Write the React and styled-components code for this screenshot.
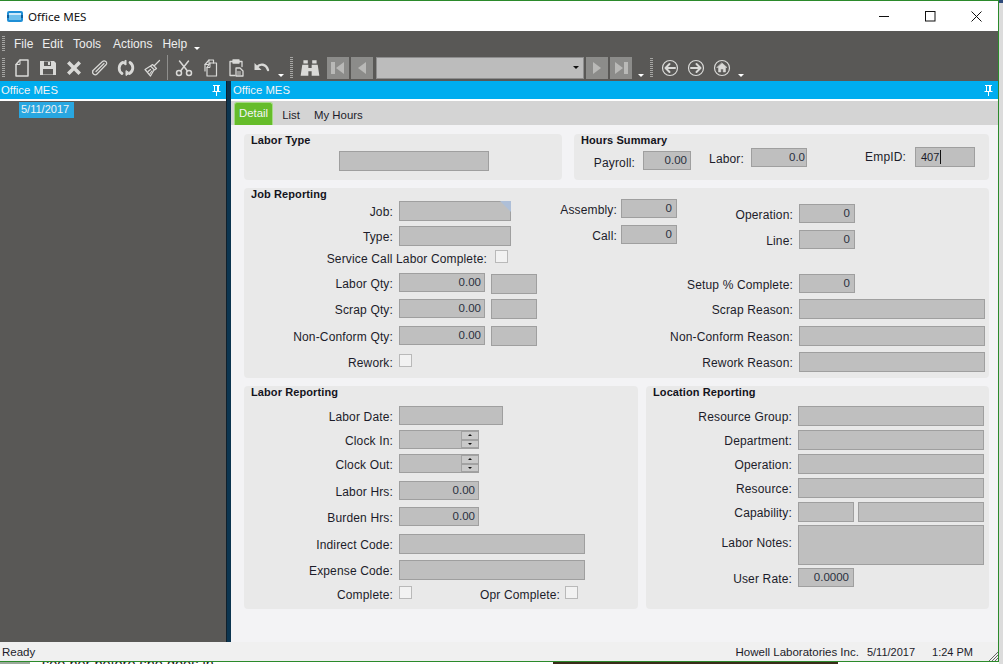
import React from 'react';
import styled, { createGlobalStyle } from 'styled-components';

const GlobalStyle = createGlobalStyle`
  html, body { margin: 0; padding: 0; background: #e4e4e4; overflow: hidden; }
  * { box-sizing: border-box; }
  body { font-family: "Liberation Sans", Arial, sans-serif; font-size: 12px; color: #1c1c2a; }
`;

const Desktop = styled.div`
  position: relative;
  width: 1003px;
  height: 664px;
  display: grid;
  grid-template-columns: 999px 4px;
  grid-template-rows: 662px 2px;
  overflow: hidden;
`;

const RightStrip = styled.div`
  grid-column: 2;
  grid-row: 1 / 3;
  background: linear-gradient(#2d4a7a 0 3px, #dcdcdc 3px);
`;

const BottomStrip = styled.div`
  grid-column: 1;
  grid-row: 2;
  background: linear-gradient(90deg, #9aa89a 0 30px, #fff 30px);
  overflow: hidden;
  padding-left: 42px;
  font-size: 14.5px;
  line-height: 5px;
  white-space: nowrap;
  color: #222;
`;

const PhotoBit = styled.div`
  position: absolute;
  left: 553px;
  top: 662px;
  width: 285px;
  height: 2px;
  background: #3a2c1a;
`;

const Win = styled.div`
  grid-column: 1;
  grid-row: 1;
  display: flex;
  flex-direction: column;
  height: 662px;
  background: #fff;
  border-top: 1px solid #2b8a2b;
  border-right: 1px solid #2b8a2b;
  border-bottom: 1px solid #2b8a2b;
`;

const TitleBar = styled.div`
  height: 30px;
  display: flex;
  align-items: center;
  padding-left: 7px;
  background: #fff;
  flex: none;
`;

const AppName = styled.span`
  font-family: "Noto Sans", sans-serif;
  font-size: 11.6px;
  margin-left: 5px;
  color: #111;
`;

const WinControls = styled.div`
  margin-left: auto;
  display: flex;
  align-items: center;
  margin-right: -1px;
`;

const WinButton = styled.div`
  width: 46px;
  height: 30px;
  display: flex;
  align-items: center;
  justify-content: center;
`;

const Bars = styled.div`
  height: 50px;
  flex: none;
  background: #595856;
  display: flex;
  flex-direction: column;
`;

const MenuBar = styled.div`
  height: 23px;
  display: flex;
  align-items: center;
  padding-left: 2px;
  padding-top: 2px;
  color: #eee;
`;

const Grip = styled.div`
  width: 3px;
  height: ${p => p.$h || 20}px;
  flex: none;
  margin: 0 ${p => p.$mr || 0}px 0 ${p => p.$ml || 0}px;
  background: repeating-linear-gradient(#a5a5a3 0 1px, transparent 1px 2px);
`;

const MenuItem = styled.span`
  margin-right: ${p => p.$mr}px;
`;

const Chevron = styled.span`
  flex: none;
  width: 6px;
  height: 3px;
  align-self: flex-end;
  margin: 0 ${p => p.$mr || 0}px ${p => p.$mb || 5}px ${p => p.$ml || 0}px;
  border-top: 3px solid #fff;
  border-left: 3px solid transparent;
  border-right: 3px solid transparent;
`;

const ToolBar = styled.div`
  height: 27px;
  display: flex;
  align-items: center;
  padding-left: 2px;
`;

const ToolBtn = styled.div`
  width: 26px;
  height: 24px;
  flex: none;
  display: flex;
  align-items: center;
  justify-content: center;
  color: #d9d9d7;
`;

const Sep = styled.div`
  width: 1px;
  height: 25px;
  margin: 0 3px 0 2px;
  background: #8f8f8d;
`;

const NavBtn = styled.div`
  width: 22px;
  height: 22px;
  flex: none;
  margin-left: ${p => p.$ml || 0}px;
  background: #8c8c8a;
  color: #b9b9b7;
  display: flex;
  align-items: center;
  justify-content: center;
`;

const Combo = styled.div`
  width: 208px;
  height: 22px;
  flex: none;
  margin: 0 2px 0 3px;
  background: #bcbcbc;
  border: 1px solid #8e8e8e;
  display: flex;
  align-items: center;
  justify-content: flex-end;
  padding-right: 4px;
`;

const ComboArrow = styled.span`
  width: 0;
  height: 0;
  border-top: 3px solid #111;
  border-left: 3px solid transparent;
  border-right: 3px solid transparent;
`;

const Body = styled.div`
  flex: 1;
  display: flex;
  min-height: 0;
`;

const Side = styled.div`
  width: 226px;
  flex: none;
  background: #595856;
  display: flex;
  flex-direction: column;
`;

const Splitter = styled.div`
  width: 5px;
  flex: none;
  background: #0c3550;
  border-left: 1px solid #10202c;
`;

const Main = styled.div`
  flex: 1;
  display: flex;
  flex-direction: column;
  min-width: 0;
  background: #f3f3f5;
`;

const DockHeader = styled.div`
  height: 18px;
  flex: none;
  background: #00adef;
  color: #f4f4f4;
  font-size: 11.3px;
  display: flex;
  align-items: center;
  justify-content: space-between;
  padding: 0 5px 0 ${p => p.$pl}px;
  box-shadow: 0 2px 0 #fff;
`;

const TreeDate = styled.div`
  margin: 3px 0 0 19px;
  width: 55px;
  height: 16px;
  line-height: 15px;
  padding-left: 2px;
  font-size: 11px;
  background: #29a7e1;
  color: #f2f2f2;
`;

const TabStrip = styled.div`
  margin-top: 2px;
  height: 24px;
  flex: none;
  background: #d4d4d4;
  display: flex;
  align-items: flex-end;
  padding-left: 3px;
  font-size: 11.4px;
`;

const Tab = styled.div`
  width: ${p => p.$w}px;
  height: ${p => (p.$active ? 23 : 20)}px;
  margin-right: ${p => p.$mr}px;
  text-align: center;
  line-height: ${p => (p.$active ? 21 : 20)}px;
  background: ${p => (p.$active ? '#65bc2a' : 'transparent')};
  color: ${p => (p.$active ? '#f4f4f4' : '#1c1c2a')};
  border: ${p => (p.$active ? '1px solid #a4dc84' : '0')};
  border-bottom: 0;
  border-radius: 3px 3px 0 0;
  white-space: nowrap;
`;

const Content = styled.div`
  flex: 1;
  padding: 9px 9px 0 13px;
  display: flex;
  flex-direction: column;
  gap: 8px;
`;

const GroupRow = styled.div`
  display: flex;
  gap: ${p => p.$gap}px;
`;

const Group = styled.div`
  width: ${p => p.$w}px;
  height: ${p => p.$h}px;
  background: #e9e9e9;
  border-radius: 4px;
`;

const GroupTitle = styled.div`
  height: 11px;
  padding-left: 7px;
  font-weight: bold;
  font-size: 11px;
  letter-spacing: 0.1px;
  line-height: 13px;
  color: #14141c;
  white-space: nowrap;
`;

const Columns = styled.div`
  display: flex;
`;

const Column = styled.div`
  width: ${p => p.$w}px;
  flex: none;
  display: flex;
  flex-direction: column;
`;

const Row = styled.div`
  display: flex;
  align-items: flex-start;
  margin-top: ${p => p.$top || 0}px;
  margin-left: ${p => p.$left || 0}px;
`;

/* height stays small so the line height only places the text, the box sets the row */
const LabelText = styled.label`
  width: ${p => p.$w}px;
  height: 13px;
  flex: none;
  display: flex;
  justify-content: flex-end;
  margin-right: ${p => p.$gap}px;
  white-space: nowrap;
  letter-spacing: 0.15px;
  line-height: ${p => p.$lh}px;
  color: #1c1c2a;
`;

const Box = styled.div`
  width: ${p => p.$w}px;
  height: ${p => p.$h}px;
  flex: none;
  margin-top: ${p => p.$top || 0}px;
  margin-left: ${p => p.$ml || 0}px;
  background: #bfbfbf;
  border: 1px solid #9f9f9f;
  text-align: right;
  padding-right: ${p => p.$pr ?? 3}px;
  font-size: 11.5px;
  line-height: 17px;
  color: #2a3040;
  position: relative;
  white-space: nowrap;
`;

const FlagCorner = styled.span`
  position: absolute;
  top: -1px;
  right: -1px;
  width: 0;
  height: 0;
  border-top: 11px solid #aebfd8;
  border-left: 11px solid transparent;
`;

const EmpValue = styled.span`
  display: block;
  text-align: left;
  padding-left: 5px;
  font-size: 11px;
  line-height: 18px;
  color: #1c1c2a;
`;

const Caret = styled.span`
  display: inline-block;
  width: 1px;
  height: 14px;
  margin-left: 1px;
  vertical-align: -3px;
  background: #111;
`;

const Check = styled.div`
  width: 13px;
  height: 13px;
  flex: none;
  background: #f2f2f2;
  border: 1px solid #b9b9b9;
`;

const SpinBox = styled(Box)`
  padding: 0;
  display: flex;
  justify-content: flex-end;
`;

const SpinColumn = styled.div`
  width: 17px;
  background: #a2a2a2;
  display: flex;
  flex-direction: column;
  gap: 2px;
  padding: 1px 0 1px 1px;
`;

const SpinPart = styled.div`
  flex: 1;
  background: #c9c9c9;
  display: flex;
  align-items: center;
  justify-content: center;
  &::after {
    content: '';
    border-left: 2px solid transparent;
    border-right: 2px solid transparent;
    ${p => (p.$up ? 'border-bottom: 2px solid #111;' : 'border-top: 2px solid #111;')}
  }
`;

const StatusBar = styled.div`
  height: 19px;
  flex: none;
  background: #f0f0f0;
  display: flex;
  align-items: center;
  padding: 1px 0 0 2px;
  font-size: 11.5px;
  color: #1c1c2a;
`;

const StatusReady = styled.span`
  flex: 1;
`;

const StatusCell = styled.span`
  margin-right: ${p => p.$mr}px;
  font-size: ${p => p.$size || 11.5}px;
  white-space: nowrap;
`;

const ResizeGrip = styled.svg`
  flex: none;
  align-self: flex-end;
`;

/* label + box pair, heights come from the reference */
const Field = ({ label, lw, gap = 6, w, h = 20, value, pr, top, children }) => (
  <Row $top={top}>
    <LabelText $w={lw} $gap={gap} $lh={h + 3}>{label}</LabelText>
    <Box $w={w} $h={h} $pr={pr}>{value}{children}</Box>
  </Row>
);

const CheckField = ({ label, lw, gap = 6, top }) => (
  <Row $top={top}>
    <LabelText $w={lw} $gap={gap} $lh={19}>{label}</LabelText>
    <Check />
  </Row>
);

const Spin = ({ label, top }) => (
  <Row $top={top}>
    <LabelText $w={149} $gap={6} $lh={22}>{label}</LabelText>
    <SpinBox $w={80} $h={19}>
      <SpinColumn>
        <SpinPart $up />
        <SpinPart />
      </SpinColumn>
    </SpinBox>
  </Row>
);

const Svg = ({ children, size = 20, fill = 'none', sw = 1.6 }) => (
  <svg width={size} height={size} viewBox="0 0 20 20" fill={fill} stroke={fill === 'none' ? 'currentColor' : 'none'} strokeWidth={sw} strokeLinecap="round" strokeLinejoin="round">
    {children}
  </svg>
);

const PinIcon = () => (
  <svg width="9" height="11" viewBox="0 0 9 11">
    <path d="M1 0h7v1H7v5h1.500v1H5v4H4V7H.5V6H2V1H1z" fill="#fff" />
    <rect x="3" y="1" width="3" height="5" fill="#00adef" />
    <rect x="5" y="1" width="1" height="5" fill="#fff" />
  </svg>
);

const AppIcon = () => (
  <svg width="16" height="13" viewBox="0 0 16 13">
    <rect x="0" y="1" width="16" height="11" rx="2" fill="#1f8fd6" />
    <rect x="2" y="3" width="12" height="7" fill="#6fc0ec" />
    <rect x="2" y="3" width="12" height="2" fill="#cfeafa" />
    <rect x="0" y="5" width="2" height="3" fill="#0d5f9e" />
    <rect x="14" y="5" width="2" height="3" fill="#0d5f9e" />
  </svg>
);

export default function App() {
  return (
    <>
      <GlobalStyle />
      <Desktop>
        <Win>
          <TitleBar>
            <AppIcon />
            <AppName>Office MES</AppName>
            <WinControls>
              <WinButton>
                <svg width="11" height="11"><path d="M0 5.5h10" stroke="#111" /></svg>
              </WinButton>
              <WinButton>
                <svg width="11" height="11"><rect x=".5" y=".5" width="9.5" height="9.5" fill="none" stroke="#111" /></svg>
              </WinButton>
              <WinButton>
                <svg width="11" height="11"><path d="M.5.5l10 10M10.500.5l-10 10" stroke="#111" /></svg>
              </WinButton>
            </WinControls>
          </TitleBar>
          <Bars>
            <MenuBar>
              <Grip $h={16} $mr={9} />
              <MenuItem $mr={9}>File</MenuItem>
              <MenuItem $mr={10}>Edit</MenuItem>
              <MenuItem $mr={12}>Tools</MenuItem>
              <MenuItem $mr={10}>Actions</MenuItem>
              <MenuItem $mr={7}>Help</MenuItem>
              <Chevron $mb={4} />
            </MenuBar>
            <ToolBar>
              <Grip $h={20} $mr={4} />
              <ToolBtn><Svg sw={1.5}><path d="M8 2h8v16H4V6.500z" /><path d="M8 2v4.500H4" strokeWidth="1" /></Svg></ToolBtn>
              <ToolBtn>
                <Svg fill="currentColor">
                  <path fillRule="evenodd" d="M2 3h14l2 2v12H2zM6 3.600v4.400h7V3.600zM5 11v5.400h10V11z" />
                  <rect x="10" y="4" width="2" height="3" />
                </Svg>
              </ToolBtn>
              <ToolBtn><Svg fill="currentColor"><path d="M3 5.500L5.500 3 10 7.500 14.500 3 17 5.500 12.500 10 17 14.500 14.500 17 10 12.500 5.500 17 3 14.500 7.500 10z" /></Svg></ToolBtn>
              <ToolBtn><Svg sw={1.2}><path d="M2.500 13L12.500 3.500c2-1.800 5.500.6 3.700 3L7 16c-2 2-5.500-.5-4-3M6 13.500L14 5.500" /></Svg></ToolBtn>
              <ToolBtn><Svg sw={2.8}><path d="M6 15.500A6.500 6.500 0 0 1 6.500 4.500" /><path d="M14 4.500A6.500 6.500 0 0 1 13.500 15.500" /><path fill="currentColor" strokeWidth="1" d="M10 2.500v4.500l-3.500-2zM10 13v4.500l3.500-2.200z" /></Svg></ToolBtn>
              <ToolBtn><Svg sw={1.2}><path d="M12 8l5.500-5.500M10.500 6.500l4 4-2 1.500-4-4zM8.500 8L3 11.500 8.500 18l3.500-6" /><path d="M6 13.500l2.500-2M8 15.500l2-2.500" /></Svg></ToolBtn>
              <Sep />
              <ToolBtn><Svg sw={1.5}><circle cx="5" cy="15" r="2.500" /><circle cx="15" cy="15" r="2.500" /><path d="M6.500 13L14.500 3M13.500 13L5.500 3" /></Svg></ToolBtn>
              <ToolBtn><Svg sw={1.2}><path d="M5 13V6.500L9 2h4.500v3" /><path d="M9 2v4.500H5" strokeWidth="1" /><path d="M10 5h6.500v13H7v-8.500z" /><path d="M10 5v4.500H7" strokeWidth="1" /></Svg></ToolBtn>
              <ToolBtn><Svg sw={1.3}><path d="M7 3.500H4v14h5M13 3.500h3v5" /><rect x="7" y="2" width="6" height="3" fill="currentColor" /><path d="M10 10h4l3 3v5h-7z" /><path d="M11.500 14h3M11.500 16h3" strokeWidth="1" /></Svg></ToolBtn>
              <ToolBtn><Svg sw={2.4}><path d="M5 9c3-3.500 9-3.500 11 3" /><path d="M2.500 5v7h7z" fill="currentColor" strokeWidth="0" /></Svg></ToolBtn>
              <Chevron $mb={4} $ml={3} $mr={6} />
              <Grip $h={22} $mr={4} />
              <ToolBtn>
                <Svg size={22} fill="currentColor">
                  <path d="M4 3h4v3H4zM12 3h4v3h-4zM3 7h5.500v3h3V7H17l1.500 10h-7v-4h-3v4h-7z" />
                </Svg>
              </ToolBtn>
              <NavBtn $ml={4}><svg width="16" height="16"><path d="M1 2h4v12H1zM14 2v12L6 8z" fill="currentColor" /></svg></NavBtn>
              <NavBtn $ml={2}><svg width="16" height="16"><path d="M12 2v12L4 8z" fill="currentColor" /></svg></NavBtn>
              <Combo><ComboArrow /></Combo>
              <NavBtn><svg width="16" height="16"><path d="M4 2v12l8-6z" fill="currentColor" /></svg></NavBtn>
              <NavBtn $ml={2}><svg width="16" height="16"><path d="M15 2h-4v12h4zM2 2v12l8-6z" fill="currentColor" /></svg></NavBtn>
              <Chevron $mb={4} $ml={6} $mr={6} />
              <Grip $h={20} $mr={4} />
              <ToolBtn><Svg sw={1.2}><circle cx="10" cy="10" r="7.500" /><path d="M15 10H6M9.500 6L5.500 10l4 4" strokeWidth="2" /></Svg></ToolBtn>
              <ToolBtn><Svg sw={1.2}><circle cx="10" cy="10" r="7.500" /><path d="M5 10h9M10.500 6l4 4-4 4" strokeWidth="2" /></Svg></ToolBtn>
              <ToolBtn><Svg sw={1.2}><circle cx="10" cy="10" r="7.500" /><path fill="currentColor" strokeWidth=".5" d="M10 5l5 4.500h-1.500V14h-2.300v-3H8.800v3H6.500V9.500H5z" /></Svg></ToolBtn>
              <Chevron $mb={4} $ml={3} />
            </ToolBar>
          </Bars>
          <Body>
            <Side>
              <DockHeader $pl={1}>Office MES<PinIcon /></DockHeader>
              <TreeDate>5/11/2017</TreeDate>
            </Side>
            <Splitter />
            <Main>
              <DockHeader $pl={2}>Office MES<PinIcon /></DockHeader>
              <TabStrip>
                <Tab $active $w={39} $mr={9}>Detail</Tab>
                <Tab $w={18} $mr={14}>List</Tab>
                <Tab $w={48} $mr={0}>My Hours</Tab>
              </TabStrip>
              <Content>
                <GroupRow $gap={12}>
                  <Group $w={318} $h={46}>
                    <GroupTitle>Labor Type</GroupTitle>
                    <Row $top={6} $left={95}><Box $w={150} $h={20} /></Row>
                  </Group>
                  <Group $w={415} $h={46}>
                    <GroupTitle>Hours Summary</GroupTitle>
                    <Row $top={2}>
                      <LabelText $w={61} $gap={8} $lh={32}>Payroll:</LabelText>
                      <Box $w={48} $h={19} $top={4}>0.00</Box>
                      <LabelText $w={53} $gap={7} $lh={25}>Labor:</LabelText>
                      <Box $w={56} $h={19} $top={1} $pr={1}>0.0</Box>
                      <LabelText $w={99} $gap={9} $lh={21}>EmpID:</LabelText>
                      <Box $w={60} $h={20}><EmpValue>407<Caret /></EmpValue></Box>
                    </Row>
                  </Group>
                </GroupRow>
                <Group $w={745} $h={190}>
                  <GroupTitle>Job Reporting</GroupTitle>
                  <Columns>
                    <Column $w={293}>
                      <Field label="Job:" lw={149} w={112} top={2}><FlagCorner /></Field>
                      <Field label="Type:" lw={149} w={112} top={5} />
                      <CheckField label="Service Call Labor Complete:" lw={243} gap={8} top={4} />
                      <Row $top={10}>
                        <LabelText $w={149} $gap={6} $lh={22}>Labor Qty:</LabelText>
                        <Box $w={86} $h={19}>0.00</Box>
                        <Box $w={46} $h={20} $ml={6} $top={1} />
                      </Row>
                      <Row $top={5}>
                        <LabelText $w={149} $gap={6} $lh={22}>Scrap Qty:</LabelText>
                        <Box $w={86} $h={19}>0.00</Box>
                        <Box $w={46} $h={20} $ml={6} />
                      </Row>
                      <Row $top={7}>
                        <LabelText $w={149} $gap={6} $lh={22}>Non-Conform Qty:</LabelText>
                        <Box $w={86} $h={19}>0.00</Box>
                        <Box $w={46} $h={20} $ml={6} />
                      </Row>
                      <CheckField label="Rework:" lw={149} top={8} />
                    </Column>
                    <Column $w={140}>
                      <Field label="Assembly:" lw={80} gap={4} w={56} h={19} value="0" pr={4} />
                      <Field label="Call:" lw={80} gap={4} w={56} h={19} value="0" pr={4} top={7} />
                    </Column>
                    <Column $w={308}>
                      <Field label="Operation:" lw={116} w={56} h={19} value="0" pr={4} top={5} />
                      <Field label="Line:" lw={116} w={56} h={19} value="0" pr={4} top={7} />
                      <Field label="Setup % Complete:" lw={116} w={56} h={19} value="0" pr={4} top={25} />
                      <Field label="Scrap Reason:" lw={116} w={186} top={6} />
                      <Field label="Non-Conform Reason:" lw={116} w={186} top={7} />
                      <Field label="Rework Reason:" lw={116} w={186} top={6} />
                    </Column>
                  </Columns>
                </Group>
                <GroupRow $gap={8}>
                  <Group $w={394} $h={223}>
                    <GroupTitle>Labor Reporting</GroupTitle>
                    <Field label="Labor Date:" lw={149} w={104} h={19} top={9} />
                    <Spin label="Clock In:" top={5} />
                    <Spin label="Clock Out:" top={5} />
                    <Field label="Labor Hrs:" lw={149} w={80} h={19} value="0.00" top={8} />
                    <Field label="Burden Hrs:" lw={149} w={80} h={19} value="0.00" top={7} />
                    <Field label="Indirect Code:" lw={149} w={186} top={8} />
                    <Field label="Expense Code:" lw={149} w={186} top={6} />
                    <Row $top={6}>
                      <LabelText $w={149} $gap={6} $lh={19}>Complete:</LabelText>
                      <Check />
                      <LabelText $w={148} $gap={5} $lh={19}>Opr Complete:</LabelText>
                      <Check />
                    </Row>
                  </Group>
                  <Group $w={343} $h={223}>
                    <GroupTitle>Location Reporting</GroupTitle>
                    <Field label="Resource Group:" lw={146} w={186} top={9} />
                    <Field label="Department:" lw={146} w={186} top={4} />
                    <Field label="Operation:" lw={146} w={186} top={4} />
                    <Field label="Resource:" lw={146} w={186} top={4} />
                    <Row $top={4}>
                      <LabelText $w={146} $gap={6} $lh={23}>Capability:</LabelText>
                      <Box $w={56} $h={20} />
                      <Box $w={126} $h={20} $ml={4} />
                    </Row>
                    <Row $top={3}>
                      <LabelText $w={146} $gap={6} $lh={36}>Labor Notes:</LabelText>
                      <Box $w={186} $h={40} />
                    </Row>
                    <Field label="User Rate:" lw={146} w={56} h={19} value="0.0000" pr={4} top={3} />
                  </Group>
                </GroupRow>
              </Content>
            </Main>
          </Body>
          <StatusBar>
            <StatusReady>Ready</StatusReady>
            <StatusCell $mr={8}>Howell Laboratories Inc.</StatusCell>
            <StatusCell $mr={17} $size={11}>5/11/2017</StatusCell>
            <StatusCell $mr={15} $size={11}>1:24 PM</StatusCell>
            <ResizeGrip width="10" height="10" viewBox="0 0 10 10">
              <path d="M10 1L1 10M10 4L4 10M10 7L7 10" stroke="#666" fill="none" />
            </ResizeGrip>
          </StatusBar>
        </Win>
        <RightStrip />
        <BottomStrip>see her before she goes in.</BottomStrip>
        <PhotoBit />
      </Desktop>
    </>
  );
}
